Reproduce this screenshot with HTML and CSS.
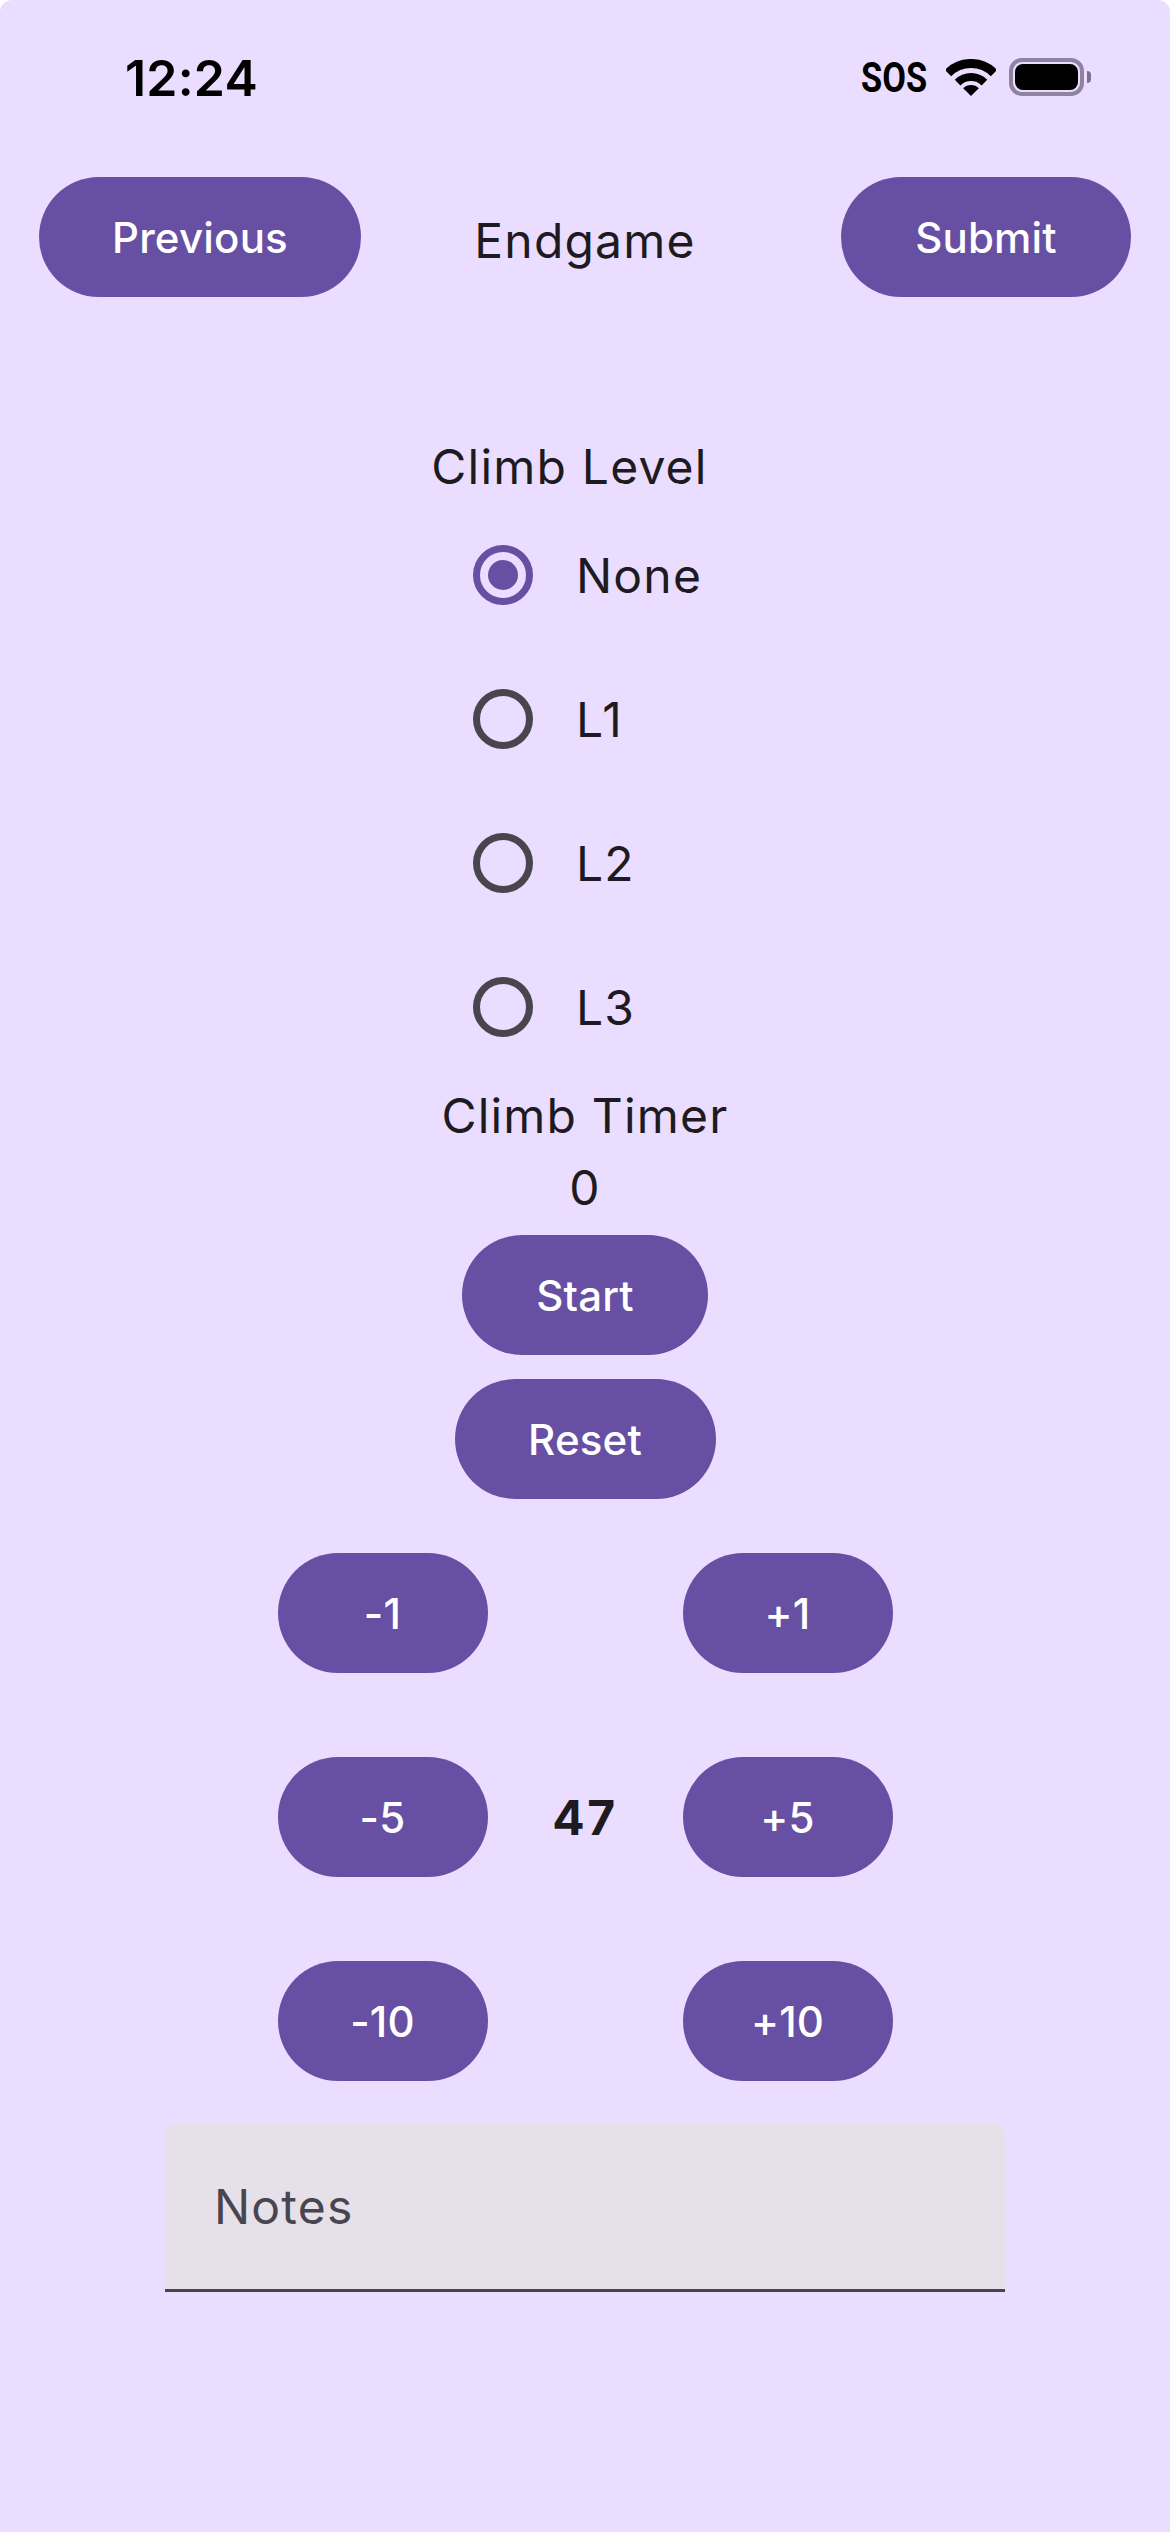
FILE: index.html
```html
<!DOCTYPE html>
<html lang="en">
<head>
    <meta charset="UTF-8">
    <meta name="viewport" content="width=device-width, initial-scale=1.0">
    <title>Endgame</title>
    <link rel="stylesheet" href="styles.css">
</head>
<body>
    <!-- Status bar -->
    <div class="status-bar">
        <span class="time">12:24</span>
        <div class="status-icons">
            <span class="sos">SOS</span>
            <svg class="wifi" width="50" height="37" viewBox="0 0 50 37">
                <path d="M2 14A32.5 32.5 0 0 1 48 14" fill="none" stroke="#000" stroke-width="9"/>
                <path d="M11.6 23.6A19 19 0 0 1 38.4 23.6" fill="none" stroke="#000" stroke-width="8"/>
                <path d="M25 37L17.2 29.2A11 11 0 0 1 32.8 29.2Z" fill="#000"/>
            </svg>
            <div class="battery"><div class="battery-fill"></div></div>
            <div class="battery-cap"></div>
        </div>
    </div>

    <!-- Top navigation -->
    <div class="top-row">
        <button class="btn btn-left">Previous</button>
        <span class="title">Endgame</span>
        <button class="btn btn-right">Submit</button>
    </div>

    <!-- Climb level -->
    <div class="text-line climb-label">Climb Level</div>
    <div class="radio-group">
        <div class="radio-row"><span class="radio selected"></span><span class="radio-text">None</span></div>
        <div class="radio-row"><span class="radio"></span><span class="radio-text">L1</span></div>
        <div class="radio-row"><span class="radio"></span><span class="radio-text">L2</span></div>
        <div class="radio-row"><span class="radio"></span><span class="radio-text">L3</span></div>
    </div>

    <!-- Climb timer -->
    <div class="text-line">Climb Timer</div>
    <div class="text-line">0</div>
    <div class="timer-buttons">
        <button class="btn btn-start">Start</button>
        <button class="btn btn-reset">Reset</button>
    </div>

    <!-- Counter -->
    <div class="counter">
        <button class="btn">-1</button>
        <span></span>
        <button class="btn">+1</button>
        <button class="btn">-5</button>
        <span class="count">47</span>
        <button class="btn">+5</button>
        <button class="btn">-10</button>
        <span></span>
        <button class="btn">+10</button>
    </div>

    <!-- Notes -->
    <div class="notes">Notes</div>
</body>
</html>
```

FILE: styles.css
```css
html {
    background-color: #fff;
}
body {
    font-family: Inter, "Liberation Sans", sans-serif;
    background-color: #eaddff;
    color: #1d1b20;
    margin: 0;
    width: 1170px;
    height: 2532px;
    overflow: hidden;
    border-radius: 12px 12px 0 0;
    display: flex;
    flex-direction: column;
    align-items: center;
}
.status-bar {
    width: 100%;
    height: 177px;
    flex-shrink: 0;
    box-sizing: border-box;
    padding: 52px 79px 0 125px;
    display: flex;
    justify-content: space-between;
    align-items: flex-start;
}
.time {
    font-size: 50px;
    font-weight: 600;
    line-height: 52px;
    letter-spacing: 0.2px;
    color: #000;
}
.status-icons {
    display: flex;
    align-items: center;
    height: 40px;
    margin-top: 5px;
}
.sos {
    font-family: Roboto, sans-serif;
    font-size: 43px;
    font-weight: 700;
    line-height: 40px;
    color: #000;
    width: 66px;
    margin-right: 19px;
    white-space: nowrap;
    transform: scaleX(0.8);
    transform-origin: left center;
}
.wifi {
    margin-right: 13px;
}
.battery {
    width: 75px;
    height: 38px;
    box-sizing: border-box;
    border: 4px solid #90839f;
    border-radius: 13px;
    padding: 2px;
}
.battery-fill {
    height: 100%;
    background-color: #000;
    border-radius: 8px;
}
.battery-cap {
    width: 4px;
    height: 12px;
    margin-left: 3px;
    background-color: #7b7087;
    border-radius: 0 6px 6px 0;
}
.top-row {
    width: 100%;
    box-sizing: border-box;
    padding: 0 39px;
    display: grid;
    grid-template-columns: 1fr auto 1fr;
    align-items: center;
}
.btn {
    display: block;
    height: 120px;
    padding: 0;
    border: none;
    border-radius: 60px;
    background-color: #6750a4;
    color: #fff;
    font-family: inherit;
    font-size: 42px;
    font-weight: 550;
    letter-spacing: 0.2px;
}
.btn-left {
    width: 322px;
    justify-self: start;
}
.btn-right {
    width: 290px;
    justify-self: end;
}
.title {
    font-size: 48px;
    line-height: 72px;
    letter-spacing: 1.2px;
    margin-top: 8px;
}
.text-line {
    font-size: 48px;
    line-height: 72px;
    letter-spacing: 1.2px;
    text-align: center;
}
.climb-label {
    margin-top: 134px;
    margin-right: 31px;
}
.radio-group {
    width: 224px;
    margin-bottom: 1px;
}
.radio-row {
    height: 144px;
    display: flex;
    align-items: center;
    gap: 43px;
}
.radio {
    width: 60px;
    height: 60px;
    box-sizing: border-box;
    border: 7px solid #49454f;
    border-radius: 50%;
    flex-shrink: 0;
    display: flex;
    align-items: center;
    justify-content: center;
}
.radio.selected {
    border-color: #6750a4;
}
.radio.selected::after {
    content: "";
    width: 30px;
    height: 30px;
    border-radius: 50%;
    background-color: #6750a4;
}
.radio-text {
    font-size: 48px;
    letter-spacing: 1.2px;
}
.timer-buttons {
    margin-top: 11px;
    display: flex;
    flex-direction: column;
    align-items: center;
    gap: 24px;
}
.btn-start {
    width: 246px;
}
.btn-reset {
    width: 261px;
}
.counter {
    margin-top: 54px;
    display: grid;
    grid-template-columns: 210px 195px 210px;
    row-gap: 84px;
    align-items: center;
    justify-items: center;
}
.counter .btn {
    width: 210px;
}
.count {
    font-size: 48px;
    font-weight: 700;
    letter-spacing: 2.5px;
}
.notes {
    margin-top: 43px;
    width: 840px;
    height: 168px;
    box-sizing: border-box;
    padding: 0 49px;
    display: flex;
    align-items: center;
    background-color: #e6e0e9;
    border-bottom: 3px solid #49454f;
    border-radius: 12px 12px 0 0;
    color: #49454f;
    font-size: 48px;
    letter-spacing: 1.2px;
}
```
